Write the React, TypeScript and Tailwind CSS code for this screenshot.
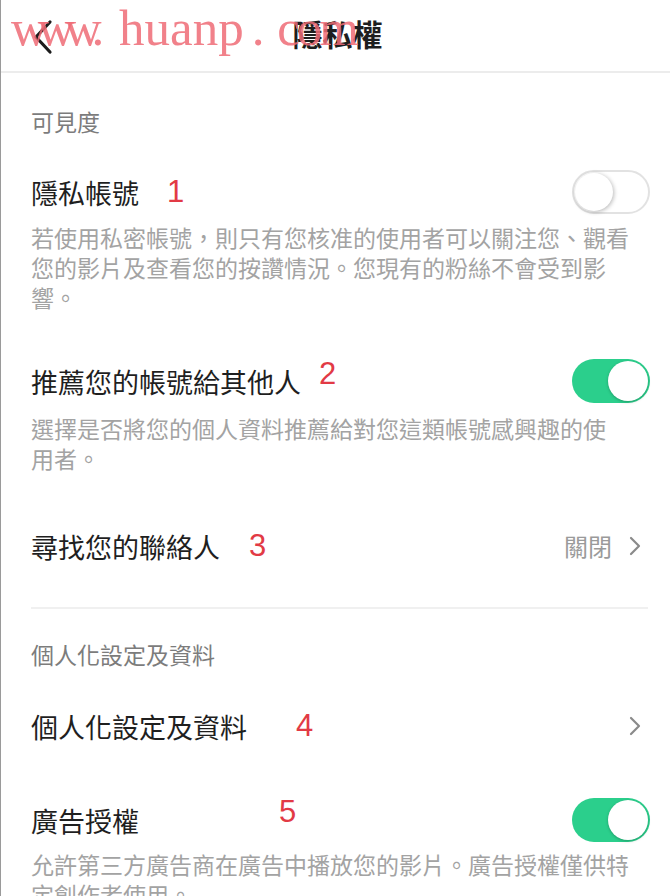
import type { ReactNode } from 'react';

const cjk = "font-['Noto_Sans_CJK_TC','Noto_Sans_CJK_SC',sans-serif]";

function Toggle({ on }: { on: boolean }) {
  return on ? (
    <div className="w-[78px] h-[44px] rounded-full bg-[#2bcf8c] flex items-center justify-end pr-[2px] shrink-0">
      <div className="w-[40px] h-[40px] rounded-full bg-white shadow-[0_1px_3px_rgba(0,0,0,0.25)]" />
    </div>
  ) : (
    <div className="w-[78px] h-[44px] rounded-full bg-white border-2 border-[#e2e2e2] flex items-center pl-[1px] shrink-0">
      <div className="w-[38px] h-[38px] rounded-full bg-white shadow-[1px_1px_4px_rgba(0,0,0,0.28)]" />
    </div>
  );
}

function Chevron() {
  return (
    <svg width="14" height="22" viewBox="0 0 14 22" className="shrink-0">
      <path d="M3 3 L11 11 L3 19" fill="none" stroke="#8a8a8a" strokeWidth="2.2" strokeLinecap="round" strokeLinejoin="round" />
    </svg>
  );
}

function Mark({ n, className }: { n: string; className: string }) {
  return (
    <span className={`absolute font-['Liberation_Sans',sans-serif] text-[31px] leading-none text-[#e23a45] ${className}`}>
      {n}
    </span>
  );
}

function Row({ title, right, mark, className = '' }: { title: string; right: ReactNode; mark: ReactNode; className?: string }) {
  return (
    <div className={`relative h-[44px] flex items-center justify-between ${className}`}>
      <span className="text-[27px] leading-none text-[#1f1f1f]">{title}</span>
      {mark}
      {right}
    </div>
  );
}

function Desc({ lines, className = '' }: { lines: string[]; className?: string }) {
  return (
    <p className={`text-[23px] leading-[30px] text-[#a3a3a3] ${className}`}>
      {lines.map((l, i) => (
        <span key={i} className="block whitespace-nowrap">{l}</span>
      ))}
    </p>
  );
}

export default function App() {
  return (
    <div className={`relative w-[670px] h-[896px] overflow-hidden bg-white border-l border-[#9a9a9a] ${cjk}`}>
      {/* header */}
      <div className="relative h-[73px] grid grid-cols-[1fr_auto_1fr] items-center border-b-2 border-[#ececec]">
        <div className="pl-[31px] pt-[2px]">
          <svg width="22" height="36" viewBox="0 0 22 36">
            <path d="M18 3 L4 18 L18 33" fill="none" stroke="#1c1c1c" strokeWidth="3.2" strokeLinecap="round" strokeLinejoin="round" />
          </svg>
        </div>
        <h1 className="text-[30px] leading-none font-bold text-[#1e1e1e] pb-[6px] pl-[4px]">隱私權</h1>
        <div />
        {/* watermark */}
        <span className="absolute left-[10px] top-[3px] font-['Liberation_Serif',serif] text-[51px] leading-none text-[#ef6b76]/85 whitespace-nowrap pointer-events-none">
          <span className="tracking-[-10px]">www</span>
          <span>. </span>
          <span className="ml-[2px]">huanp</span>
          <span className="ml-[8px]">. </span>
          <span className="tracking-[-3px]">com</span>
        </span>
      </div>

      <div className="pl-[30px] pr-[20px]">
        <div className="pt-[33px] text-[23px] leading-[30px] text-[#7c7c7c]">可見度</div>

        <Row
          className="mt-[34px]"
          title="隱私帳號"
          mark={<Mark n="1" className="left-[136px] top-[6px]" />}
          right={<Toggle on={false} />}
        />
        <Desc
          className="mt-[8px]"
          lines={['若使用私密帳號，則只有您核准的使用者可以關注您、觀看', '您的影片及查看您的按讚情況。您現有的粉絲不會受到影', '響。']}
        />

        <Row
          className="mt-[47px]"
          title="推薦您的帳號給其他人"
          mark={<Mark n="2" className="left-[288px] top-[-1px]" />}
          right={<Toggle on />}
        />
        <Desc className="mt-[10px]" lines={['選擇是否將您的個人資料推薦給對您這類帳號感興趣的使', '用者。']} />

        <Row
          className="mt-[51px]"
          title="尋找您的聯絡人"
          mark={<Mark n="3" className="left-[218px] top-[6px]" />}
          right={
            <div className="flex items-center gap-[16px] pr-[8px]">
              <span className="text-[24px] leading-none text-[#9a9a9a]">關閉</span>
              <Chevron />
            </div>
          }
        />

        <div className="mt-[39px] h-[2px] bg-[#f0f0f0] mr-[2px]" />

        <div className="mt-[30px] text-[23px] leading-[30px] text-[#7c7c7c]">個人化設定及資料</div>

        <Row
          className="mt-[35px]"
          title="個人化設定及資料"
          mark={<Mark n="4" className="left-[265px] top-[6px]" />}
          right={<div className="pr-[8px]"><Chevron /></div>}
        />

        <Row
          className="mt-[50px]"
          title="廣告授權"
          mark={<Mark n="5" className="left-[248px] top-[-2px]" />}
          right={<Toggle on />}
        />
        <Desc className="mt-[7px]" lines={['允許第三方廣告商在廣告中播放您的影片。廣告授權僅供特', '定創作者使用。']} />
      </div>
    </div>
  );
}
